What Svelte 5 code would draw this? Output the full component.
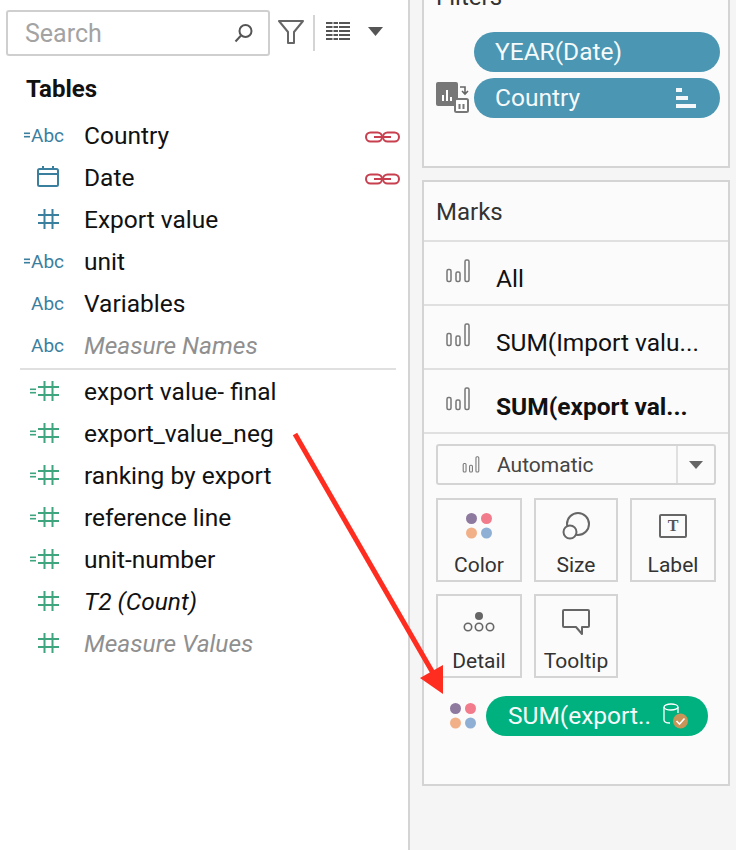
<script>
  const fields = [
    { icon: 'abc', calc: true, name: 'Country', link: true },
    { icon: 'date', name: 'Date', link: true },
    { icon: 'hash', tone: 'blue', name: 'Export value' },
    { icon: 'abc', calc: true, name: 'unit' },
    { icon: 'abc', name: 'Variables' },
    { icon: 'abc', name: 'Measure Names', style: 'muted' }
  ];
  const measures = [
    { calc: true, name: 'export value- final' },
    { calc: true, name: 'export_value_neg' },
    { calc: true, name: 'ranking by export' },
    { calc: true, name: 'reference line' },
    { calc: true, name: 'unit-number' },
    { name: 'T2 (Count)', style: 'ital' },
    { name: 'Measure Values', style: 'muted' }
  ];
  const layers = [
    { name: 'All' },
    { name: 'SUM(Import valu...' },
    { name: 'SUM(export val...', bold: true }
  ];
</script>

{#snippet bars(w, h)}
  <svg width={w} height={h} viewBox="0 0 24 24" fill="none" stroke="#777" stroke-width="1.5">
    <rect x="1" y="10.5" width="4" height="12" rx="1.5" />
    <rect x="10" y="13" width="4" height="9.5" rx="1.5" />
    <rect x="19" y="1" width="4" height="21.5" rx="1.5" />
  </svg>
{/snippet}

{#snippet hash(color)}
  <svg class="hash" width="21" height="20" viewBox="0 0 21 20" stroke={color} stroke-width="2" fill="none">
    <path d="M6.500 0v20M14.500 0v20M0 6h21M0 14h21" />
  </svg>
{/snippet}

{#snippet calcMark(color)}
  <svg class="calc" width="6" height="6" viewBox="0 0 6 6" fill={color}>
    <rect y="0.5" width="6" height="1.6" /><rect y="3.9" width="6" height="1.6" />
  </svg>
{/snippet}

{#snippet dots(size)}
  <svg width={size} height={size} viewBox="0 0 26 26">
    <circle cx="5.5" cy="5.5" r="5.5" fill="#8f7a9f" />
    <circle cx="20.5" cy="5.5" r="5.5" fill="#f27c8c" />
    <circle cx="5.5" cy="20" r="5.5" fill="#f2b088" />
    <circle cx="20.5" cy="20" r="5.5" fill="#8fb0d4" />
  </svg>
{/snippet}

{#snippet link()}
  <svg class="link" width="35" height="12" viewBox="0 0 35 12" fill="none" stroke="#c8404f" stroke-width="2">
    <rect x="1" y="1.5" width="16" height="9" rx="4.5" />
    <rect x="18" y="1.5" width="16" height="9" rx="4.5" />
    <path d="M9 6h17" />
  </svg>
{/snippet}

<div class="page">
  <aside class="data">
    <div class="toolbar">
      <div class="search">
        <span>Search</span>
        <svg width="20" height="20" viewBox="0 0 20 20" fill="none" stroke="#555" stroke-width="2">
          <circle cx="11.5" cy="8" r="6" /><path d="M7 12.5L1.5 18.5" />
        </svg>
      </div>
      <svg class="funnel" width="26" height="26" viewBox="0 0 26 26" fill="none" stroke="#666" stroke-width="2" stroke-linejoin="round">
        <path d="M1 2h24L16 13v11h-6V13z" />
      </svg>
      <span class="sep"></span>
      <svg class="list" width="24" height="18" viewBox="0 0 24 18" fill="#555">
        <rect y="0" width="24" height="2" /><rect y="4" width="24" height="2" /><rect y="8" width="24" height="2" /><rect y="12" width="24" height="2" /><rect y="16" width="24" height="2" />
        <g fill="#fff"><rect x="6.5" width="1" height="18" /><rect x="12" width="1" height="18" /></g>
      </svg>
      <svg class="caret" width="15" height="9" viewBox="0 0 15 9" fill="#555"><path d="M0 0h15L7.500 9z" /></svg>
    </div>

    <h2>Tables</h2>

    <ul class="fields">
      {#each fields as f}
        <li>
          <span class="ico">
            {#if f.icon === 'abc'}
              <span class="abc-wrap">{#if f.calc}{@render calcMark('#3b7f9f')}{/if}<span class="abc">Abc</span></span>
            {:else if f.icon === 'date'}
              <svg class="dateic" width="22" height="21" viewBox="0 0 22 21" fill="none" stroke="#3b7f9f" stroke-width="2">
                <rect x="1" y="3" width="20" height="17" rx="1.500" /><path d="M1 8h20M6 0v4M16 0v4" />
              </svg>
            {:else}
              {@render hash('#3b7f9f')}
            {/if}
          </span>
          <span class="name {f.style ?? ''}">{f.name}</span>
          {#if f.link}{@render link()}{/if}
        </li>
      {/each}
    </ul>
    <hr />
    <ul class="fields">
      {#each measures as m}
        <li>
          <span class="ico">
            {#if m.calc}{@render calcMark('#3fa57e')}{/if}
            {@render hash('#3fa57e')}
          </span>
          <span class="name {m.style ?? ''}">{m.name}</span>
        </li>
      {/each}
    </ul>
  </aside>

  <main class="shelves">
    <section class="card filters">
      <h3>Filters</h3>
      <div class="filter-body">
        <svg class="swap" width="33" height="31" viewBox="0 0 33 31">
          <rect x="0" y="0" width="22" height="24" rx="2" fill="#777" />
          <path d="M7 19v-6M11 19V8M15 19v-4" stroke="#fff" stroke-width="2" />
          <path d="M24 5h5v6M26 9l3 3 3-3" fill="none" stroke="#666" stroke-width="1.600" />
          <rect x="19" y="17" width="13" height="13" rx="1.500" fill="#fff" stroke="#777" stroke-width="2" />
          <path d="M23.500 27v-5M27.500 27v-5" stroke="#777" stroke-width="2" />
        </svg>
        <div class="pills">
          <div class="pill blue">YEAR(Date)</div>
          <div class="pill blue">
            <span>Country</span>
            <svg width="20" height="20" viewBox="0 0 20 20" fill="#f4f8fa">
              <rect x="0" y="0" width="6" height="4" /><rect x="0" y="8" width="12" height="4" /><rect x="0" y="16" width="20" height="4" />
            </svg>
          </div>
        </div>
      </div>
    </section>

    <section class="card marks">
      <h3 class="marks-title">Marks</h3>
      {#each layers as l}
        <div class="layer">
          <span class="layer-ic">{@render bars(24, 24)}</span>
          <span class="layer-text" class:bold={l.bold}>{l.name}</span>
        </div>
      {/each}

      <div class="marks-body">
        <div class="select">
          <span class="sel-main">{@render bars(18, 17)}<span>Automatic</span></span>
          <span class="sel-btn"><svg width="14" height="8" viewBox="0 0 14 8" fill="#666"><path d="M0 0h14L7 8z" /></svg></span>
        </div>

        <div class="grid">
          <div class="tile">
            <span class="tile-ic">{@render dots(26)}</span>
            <span>Color</span>
          </div>
          <div class="tile">
            <span class="tile-ic">
              <svg width="28" height="28" viewBox="0 0 28 28" fill="none" stroke="#666" stroke-width="2">
                <circle cx="16" cy="12" r="11" /><circle cx="8" cy="20" r="6.500" fill="#fbfbfb" />
              </svg>
            </span>
            <span>Size</span>
          </div>
          <div class="tile">
            <span class="tile-ic">
              <span class="tbox">T</span>
            </span>
            <span>Label</span>
          </div>
          <div class="tile">
            <span class="tile-ic">
              <svg width="32" height="22" viewBox="0 0 32 22" fill="none" stroke="#666" stroke-width="1.600">
                <circle cx="16" cy="5" r="4" fill="#666" stroke="none" />
                <circle cx="5" cy="16" r="3.700" /><circle cx="16" cy="16" r="3.700" /><circle cx="27" cy="16" r="3.700" />
              </svg>
            </span>
            <span>Detail</span>
          </div>
          <div class="tile">
            <span class="tile-ic">
              <svg width="28" height="27" viewBox="0 0 28 27" fill="none" stroke="#666" stroke-width="2" stroke-linejoin="round">
                <path d="M2 1h24a1 1 0 0 1 1 1v15a1 1 0 0 1-1 1h-6v7l-6-7H2a1 1 0 0 1-1-1V2a1 1 0 0 1 1-1z" />
              </svg>
            </span>
            <span>Tooltip</span>
          </div>
        </div>

        <div class="encoding">
          <span class="enc-dots">{@render dots(26)}</span>
          <div class="pill green">
            <span>SUM(export..</span>
            <svg width="26" height="28" viewBox="0 0 26 28" fill="none">
              <ellipse cx="8" cy="5" rx="7" ry="3" stroke="#fff" stroke-width="1.300" />
              <path d="M1 5v13c0 2 3 3 6 3M15 5v6" stroke="#fff" stroke-width="1.300" />
              <circle cx="17.500" cy="19" r="7.500" fill="#c99457" />
              <path d="M13.500 19l3 3 5-5.500" stroke="#fff" stroke-width="1.600" />
            </svg>
          </div>
        </div>
      </div>
    </section>
  </main>

  <svg class="arrow" width="736" height="850" viewBox="0 0 736 850">
    <path d="M295 434L433 673" stroke="#ff2d20" stroke-width="5" />
    <path d="M443 694L420 678L443 665z" fill="#ff2d20" />
  </svg>
</div>

<style>
  :global(body) {
    margin: 0;
    background: #fff;
  }
  .page {
    position: relative;
    display: flex;
    width: 736px;
    height: 850px;
    overflow: hidden;
    font-family: Roboto, Lato, "Noto Sans", sans-serif;
    font-size: 24.5px;
    color: #111;
  }
  .data {
    box-sizing: border-box;
    flex: none;
    background: #fff;
    border-right: 2px solid #d4d4d4;
    width: 410px;
    padding: 10px 8px 0 6px;
  }
  .toolbar {
    display: flex;
    align-items: center;
    height: 46px;
  }
  .search {
    box-sizing: border-box;
    width: 264px;
    height: 46px;
    display: flex;
    align-items: center;
    justify-content: space-between;
    padding: 0 14px 0 17px;
    border: 2px solid #cfcfcf;
    border-radius: 3px;
    color: #a3a3a3;
    font-size: 25px;
    flex: none;
  }
  .funnel { margin-left: 8px; flex: none; margin-top: -2px; }
  .sep {
    width: 2px;
    height: 36px;
    background: #d4d4d4;
    margin: 0 11px 0 9px;
    flex: none;
  }
  .list { flex: none; margin-top: -4px; }
  .caret { flex: none; margin-left: 18px; margin-top: -3px; }
  h2 {
    margin: 19px 0 11px 20px;
    font-size: 24px;
    font-weight: 700;
    line-height: 28px;
  }
  .fields {
    list-style: none;
    margin: 0;
    padding: 0;
  }
  .fields li {
    display: flex;
    align-items: center;
    height: 42px;
  }
  .ico {
    width: 53px;
    flex: none;
    display: flex;
    justify-content: flex-end;
    align-items: center;
    gap: 2px;
    color: #3b7f9f;
  }
  .abc-wrap {
    display: flex;
    align-items: center;
    gap: 1px;
    margin-right: -5px;
  }
  .abc { font-size: 19px; line-height: 1; }
  .calc { flex: none; }
  .name { margin-left: 25px; white-space: nowrap; }
  .name.muted { font-style: italic; color: #8f8f8f; }
  .name.ital { font-style: italic; }
  .link { margin-left: auto; flex: none; margin-top: 4px; }
  .dateic { margin-top: -1px; }
  hr {
    border: 0;
    height: 2px;
    background: #e0e0e0;
    margin: 2px 4px 0 14px;
  }
  .shelves {
    flex: 1;
    background: #f5f5f5;
    padding: 0 6px 0 12px;
    display: flex;
    flex-direction: column;
    gap: 12px;
  }
  .card {
    box-sizing: border-box;
    background: #fbfbfb;
    border: 2px solid #d4d4d4;
  }
  h3 {
    margin: 0;
    font-weight: 400;
    font-size: 24px;
    color: #333;
    line-height: 30px;
  }
  .filters {
    height: 208px;
    margin-top: -40px;
    padding: 20px 8px 0 12px;
    flex: none;
  }
  .filter-body {
    display: flex;
    align-items: flex-end;
    margin-top: 20px;
  }
  .swap { flex: none; margin-right: 5px; margin-bottom: 5px; }
  .pills {
    display: flex;
    flex-direction: column;
    gap: 6px;
    width: 246px;
  }
  .pill {
    box-sizing: border-box;
    height: 40px;
    border-radius: 20px;
    color: #f5fafb;
    display: flex;
    align-items: center;
    justify-content: space-between;
    white-space: nowrap;
  }
  .pill.blue {
    background: #4b96b3;
    padding: 0 24px 2px 21px;
  }
  .pill.blue svg { margin-top: 2px; }
  .marks {
    height: 606px;
    flex: none;
  }
  .marks-title {
    box-sizing: border-box;
    height: 60px;
    padding: 15px 12px 0;
    border-bottom: 2px solid #e0e0e0;
  }
  .layer {
    box-sizing: border-box;
    height: 64px;
    border-bottom: 2px solid #e0e0e0;
    display: flex;
    align-items: center;
    padding-left: 22px;
    white-space: nowrap;
  }
  .layer-ic {
    display: flex;
    width: 50px;
    flex: none;
    margin-top: -4px;
  }
  .layer-text { margin-top: 10px; }
  .bold { font-weight: 700; }
  .marks-body { padding: 10px 12px 0; }
  .select {
    box-sizing: border-box;
    height: 41px;
    width: 280px;
    border: 2px solid #d4d4d4;
    border-radius: 3px;
    display: flex;
    align-items: center;
    font-size: 21px;
    color: #444;
  }
  .sel-main {
    flex: 1;
    display: flex;
    align-items: center;
    gap: 17px;
    padding-left: 24px;
    height: 100%;
  }
  .sel-btn {
    width: 36px;
    height: 100%;
    border-left: 2px solid #e0e0e0;
    display: flex;
    align-items: center;
    justify-content: center;
  }
  .grid {
    display: grid;
    grid-template-columns: 86px 84px 86px;
    grid-auto-rows: 84px;
    gap: 12px;
    margin-top: 13px;
  }
  .tile {
    box-sizing: border-box;
    border: 2px solid #d4d4d4;
    display: flex;
    flex-direction: column;
    align-items: center;
    font-size: 21px;
    color: #333;
    line-height: 26px;
  }
  .tile-ic {
    height: 52px;
    display: flex;
    align-items: center;
    justify-content: center;
    flex: none;
  }
  .tbox {
    box-sizing: border-box;
    width: 28px;
    height: 24px;
    border: 2px solid #666;
    border-radius: 2px;
    font-family: "Liberation Serif", serif;
    font-size: 16px;
    font-weight: 700;
    line-height: 20px;
    text-align: center;
    color: #555;
  }
  .encoding {
    display: flex;
    align-items: center;
    margin-top: 18px;
    padding-left: 14px;
  }
  .enc-dots { display: flex; flex: none; width: 36px; }
  .pill.green {
    background: #00b180;
    width: 222px;
    padding: 0 19px 0 22px;
  }
  .pill.green span { margin-bottom: 2px; }
  .arrow {
    position: absolute;
    left: 0;
    top: 0;
    pointer-events: none;
  }
</style>
